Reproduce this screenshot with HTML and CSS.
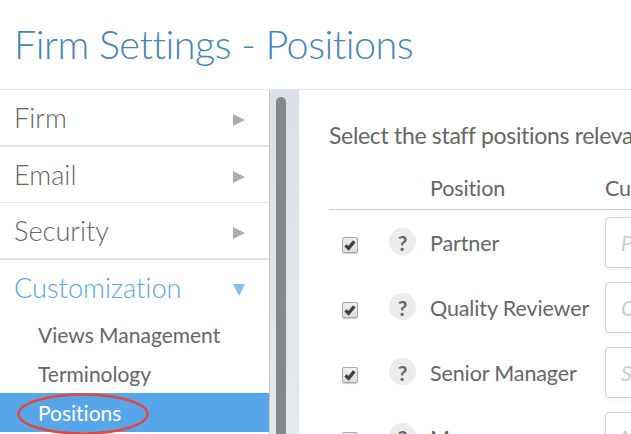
FILE: index.html
```html
<!DOCTYPE html>
<html lang="en">
<head>
<meta charset="utf-8">
<title>Firm Settings - Positions</title>
<link rel="stylesheet" href="styles.css">
</head>
<body>
<header class="header"><h1 class="title">Firm Settings - Positions</h1></header>
<div class="layout">
  <nav class="sidebar">
    <div class="nav-item nav-thick"><span>Firm</span><i class="arrow"></i></div>
    <div class="nav-item nav-thin"><span>Email</span><i class="arrow"></i></div>
    <div class="nav-item nav-thick"><span>Security</span><i class="arrow"></i></div>
    <div class="nav-item nav-open"><span>Customization</span><i class="arrow-down"></i></div>
    <div class="sub">Views Management</div>
    <div class="sub">Terminology</div>
    <div class="sub sub-active">Positions
      <svg class="ring" viewBox="0 0 134 44" width="134" height="44"><ellipse cx="67" cy="22" rx="64.5" ry="19.5" fill="none" stroke="#e54840" stroke-width="2.6"/></svg>
    </div>
  </nav>
  <div class="track"><div class="thumb"></div></div>
  <main class="content">
    <p class="intro">Select the staff positions relevant</p>
    <div class="row head"><span class="name">Position</span><span class="custom">Custom</span></div>
    <div class="row"><span class="check"><svg viewBox="0 0 12 12" width="12" height="12"><path d="M1.5 6.3 4.5 9.3 10.3 2.4"/></svg></span><span class="help">?</span><span class="name">Partner</span><span class="field">Partner</span></div>
    <div class="row"><span class="check"><svg viewBox="0 0 12 12" width="12" height="12"><path d="M1.5 6.3 4.5 9.3 10.3 2.4"/></svg></span><span class="help">?</span><span class="name">Quality Reviewer</span><span class="field">Quality Reviewer</span></div>
    <div class="row"><span class="check"><svg viewBox="0 0 12 12" width="12" height="12"><path d="M1.5 6.3 4.5 9.3 10.3 2.4"/></svg></span><span class="help">?</span><span class="name">Senior Manager</span><span class="field">Senior Manager</span></div>
    <div class="row"><span class="check"><svg viewBox="0 0 12 12" width="12" height="12"><path d="M1.5 6.3 4.5 9.3 10.3 2.4"/></svg></span><span class="help">?</span><span class="name">Manager</span><span class="field">Manager</span></div>
  </main>
</div>
</body>
</html>
```
FILE: styles.css
```css
* { box-sizing: border-box; }
body {
  margin: 0;
  height: 434px;
  overflow: hidden;
  background: #fff;
  color: #666;
  font-family: Lato, sans-serif;
  font-variant-ligatures: none;
}
.header {
  height: 90px;
  padding-left: 14px;
  border-bottom: 1px solid #e3e3e3;
}
.title {
  margin: 0;
  color: #4585bd;
  font-size: 39.5px;
  font-weight: 300;
  line-height: 88px;
  letter-spacing: -0.5px;
  white-space: nowrap;
}
.layout {
  display: grid;
  grid-template-columns: 269px 30px 332px;
  height: 344px;
  overflow: hidden;
}
.nav-item {
  display: flex;
  align-items: center;
  justify-content: space-between;
  height: 57px;
  padding: 0 24px 0 14px;
  font-size: 27.2px;
  font-weight: 300;
  border-bottom: 0 solid #dfe4e9;
}
.nav-thick { border-bottom-width: 2px; }
.nav-thin { height: 56px; border-bottom-width: 1px; }
.nav-open { height: 55px; color: #58a5ea; }
.arrow {
  border-left: 12px solid #adadad;
  border-top: 6.5px solid transparent;
  border-bottom: 6.5px solid transparent;
  margin-top: 5px;
}
.arrow-down {
  border-top: 12px solid #84bfee;
  border-left: 6.5px solid transparent;
  border-right: 6.5px solid transparent;
  margin-top: 4px;
}
.sub {
  height: 39px;
  padding-left: 38px;
  font-size: 21px;
  line-height: 39px;
}
.sub-active {
  position: relative;
  color: #fff;
  background: #58a6ea;
}
.ring { position: absolute; left: 16px; top: -1px; }
.track {
  border-left: 1px solid #c5c9ce;
  background: linear-gradient(#dbe0e8, #e6e9ec);
  padding: 7px 0 0 6px;
  overflow: hidden;
}
.thumb {
  width: 10px;
  height: 400px;
  border-radius: 5px;
  background: #858889;
}
.content { padding-left: 30px; overflow: hidden; }
.intro {
  margin: 0;
  padding-top: 27px;
  height: 77px;
  font-size: 23px;
  letter-spacing: -0.32px;
  line-height: 36px;
  white-space: nowrap;
}
.row {
  display: grid;
  grid-template-columns: 60px 41px 175px 150px;
  align-items: center;
  height: 65px;
  font-size: 21.5px;
  letter-spacing: -0.12px;
  white-space: nowrap;
}
.head {
  height: 43px;
  border-bottom: 1px solid #ccc;
}
.head .name { grid-column: 3; }
.check {
  display: flex;
  align-items: center;
  justify-content: center;
  width: 16px;
  height: 16px;
  margin: 5px 0 0 13px;
  border: 1px solid #aaa;
  border-radius: 2px;
  background: linear-gradient(#eee, #ddd);
  box-shadow: 0 1px 1px #ccc;
}
.check svg { flex: none; }
.check path { fill: none; stroke: #404040; stroke-width: 3.2; }
.help {
  width: 27px;
  height: 27px;
  margin-top: -2px;
  border-radius: 50%;
  background: #ececec;
  font-size: 21px;
  font-weight: 700;
  line-height: 29px;
  text-align: center;
}
.field {
  height: 51px;
  padding-left: 15px;
  border: 1px solid #d2d2d2;
  border-radius: 4px;
  box-shadow: 0 1px 4px #eee;
  color: #ccc;
  font-size: 21px;
  font-style: italic;
  line-height: 50px;
}
```
